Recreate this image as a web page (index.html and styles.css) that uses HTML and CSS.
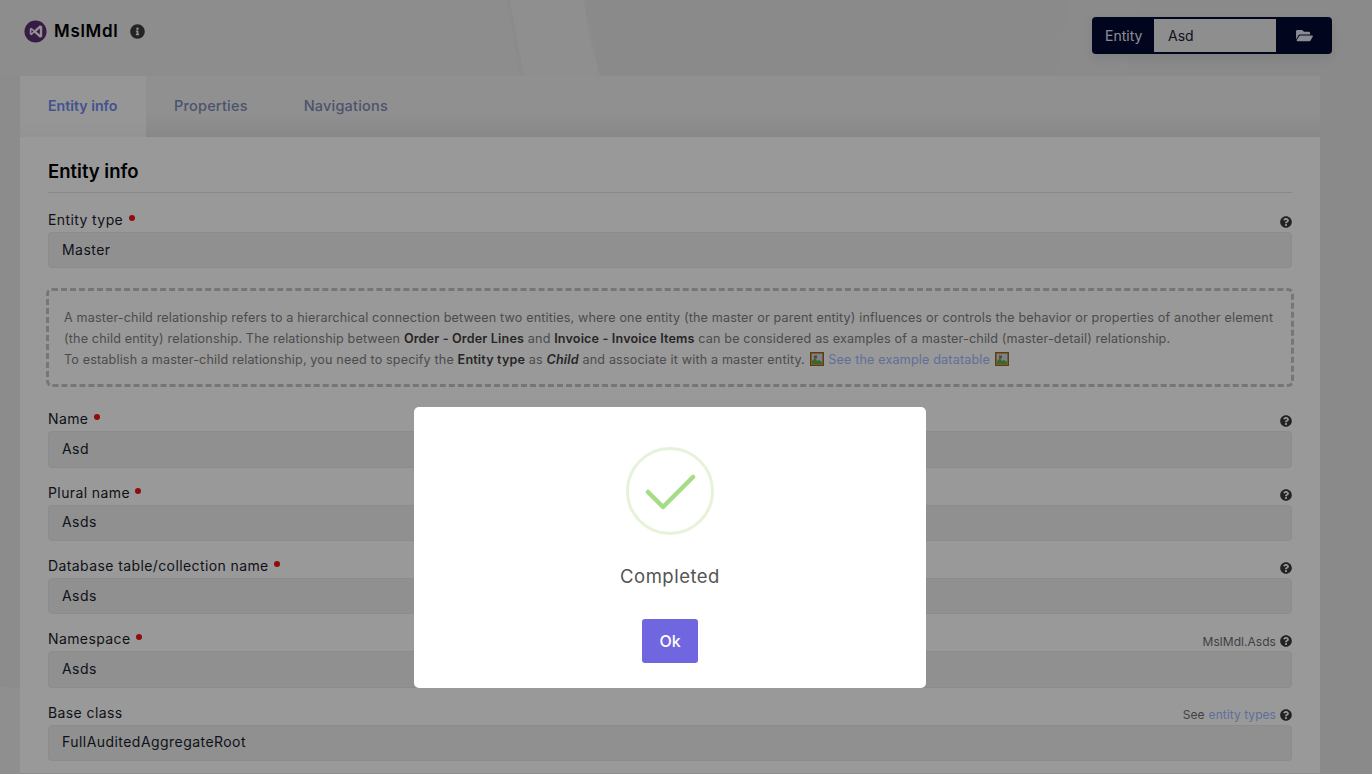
FILE: index.html
```html
<!DOCTYPE html>
<html lang="en">
<head>
<meta charset="utf-8">
<title>MslMdl</title>
<link rel="stylesheet" href="styles.css">
</head>
<body>
<svg class="bg-shapes" viewBox="0 0 1372 774" preserveAspectRatio="none" aria-hidden="true">
  <polygon points="0,0 506,0 522,76 0,76" fill="#ebebeb"/>
  <polygon points="506,0 510,0 524,76 520,76" fill="#e8e8e8"/>
  <polygon points="510,0 584,0 588,30 600,76 524,76" fill="#eeeeee"/>
  <polygon points="584,0 1070,0 1056,76 600,76" fill="#e6e6e6"/>
  <polygon points="1070,0 1140,0 1126,76 1056,76" fill="#e8e8e8"/>
  <polygon points="1140,0 1372,0 1372,76 1126,76" fill="#e6e6e6"/>
  <polygon points="1320,76 1372,76 1372,774 1320,774" fill="#e6e6e6"/>
  <polygon points="0,76 20,76 20,688 0,686" fill="#e9e9e9"/>
  <polygon points="0,686 20,688 20,774 0,774" fill="#eeeeee"/>
</svg>
<div class="page">
  <header class="topbar">
    <div class="brand">
      <svg class="logo" viewBox="0 0 24 24"><circle cx="12" cy="12" r="11.5" fill="#5c2d73"/><path d="M16.6 5.4 10.8 10.6 7.8 8.2 6 9.2v5.6l1.8 1 3-2.4 5.8 5.2 2.4-1.1V6.5zM7.8 13.9v-3.8l2 1.9zM16.5 15.2 12.9 12l3.6-3.2z" fill="#f4f0f7"/></svg>
      <span class="brand-name">MslMdl</span>
      <svg class="info-icon" viewBox="0 0 512 512"><path d="M256 8C119.043 8 8 119.083 8 256c0 136.997 111.043 248 248 248s248-111.003 248-248C504 119.083 392.957 8 256 8zm0 110c23.196 0 42 18.804 42 42s-18.804 42-42 42-42-18.804-42-42 18.804-42 42-42zm56 254c0 6.627-5.373 12-12 12h-88c-6.627 0-12-5.373-12-12v-24c0-6.627 5.373-12 12-12h12v-64h-12c-6.627 0-12-5.373-12-12v-24c0-6.627 5.373-12 12-12h64c6.627 0 12 5.373 12 12v100h12c6.627 0 12 5.373 12 12v24z"/></svg>
    </div>
    <div class="entity-picker">
      <span class="entity-label">Entity</span>
      <span class="entity-value">Asd</span>
      <span class="entity-open">
        <svg class="folder-icon" viewBox="0 0 576 512"><path d="M572.694 292.093L500.27 416.248A63.997 63.997 0 0 1 444.989 448H45.025c-18.523 0-30.064-20.093-20.731-36.093l72.424-124.155A64 64 0 0 1 152 256h399.964c18.523 0 30.064 20.093 20.73 36.093zM152 224h328v-48c0-26.51-21.49-48-48-48H272l-64-64H48C21.49 64 0 85.49 0 112v278.046l69.077-118.418C86.214 242.25 117.989 224 152 224z"/></svg>
      </span>
    </div>
  </header>

  <main class="card">
    <nav class="tabs">
      <span class="tab tab-active">Entity info</span>
      <span class="tab">Properties</span>
      <span class="tab">Navigations</span>
    </nav>
    <section class="card-body">
      <h2 class="section-title">Entity info</h2>

      <div class="field">
        <div class="field-head">
          <label class="field-label">Entity type <i class="req"></i></label>
          <span class="hint"><svg class="help-icon" viewBox="0 0 512 512"><use href="#q"/></svg></span>
        </div>
        <div class="input">Master</div>
      </div>

      <div class="note">
        A master-child relationship refers to a hierarchical connection between two entities, where one entity (the master or parent entity) influences or controls the behavior or properties of another element (the child entity) relationship. The relationship between <b>Order - Order Lines</b> and <b>Invoice - Invoice Items</b> can be considered as examples of a master-child (master-detail) relationship.<br>
        To establish a master-child relationship, you need to specify the <b>Entity type</b> as <b><em>Child</em></b> and associate it with a master entity.
        <svg class="pic" viewBox="0 0 14 14"><rect x=".5" y=".5" width="13" height="13" fill="#c89a45" stroke="#8d6a2a"/><rect x="2" y="2" width="10" height="10" fill="#c9dcec"/><path d="M2 12V9l3-3 2 3 2-1 3 2v2z" fill="#5fae4a"/><rect x="4" y="3.5" width="3" height="3" fill="#d6584f"/></svg>
        <a class="link">See the example datatable</a>
        <svg class="pic" viewBox="0 0 14 14"><rect x=".5" y=".5" width="13" height="13" fill="#c89a45" stroke="#8d6a2a"/><rect x="2" y="2" width="10" height="10" fill="#c9dcec"/><path d="M2 12V9l3-3 2 3 2-1 3 2v2z" fill="#5fae4a"/><rect x="4" y="3.5" width="3" height="3" fill="#d6584f"/></svg>
      </div>

      <div class="field">
        <div class="field-head">
          <label class="field-label">Name <i class="req"></i></label>
          <span class="hint"><svg class="help-icon" viewBox="0 0 512 512"><use href="#q"/></svg></span>
        </div>
        <div class="input">Asd</div>
      </div>

      <div class="field">
        <div class="field-head">
          <label class="field-label">Plural name <i class="req"></i></label>
          <span class="hint"><svg class="help-icon" viewBox="0 0 512 512"><use href="#q"/></svg></span>
        </div>
        <div class="input">Asds</div>
      </div>

      <div class="field">
        <div class="field-head">
          <label class="field-label">Database table/collection name <i class="req"></i></label>
          <span class="hint"><svg class="help-icon" viewBox="0 0 512 512"><use href="#q"/></svg></span>
        </div>
        <div class="input">Asds</div>
      </div>

      <div class="field">
        <div class="field-head">
          <label class="field-label">Namespace <i class="req"></i></label>
          <span class="hint">MslMdl.Asds <svg class="help-icon" viewBox="0 0 512 512"><use href="#q"/></svg></span>
        </div>
        <div class="input">Asds</div>
      </div>

      <div class="field">
        <div class="field-head">
          <label class="field-label">Base class</label>
          <span class="hint">See <a class="link">entity types</a> <svg class="help-icon" viewBox="0 0 512 512"><use href="#q"/></svg></span>
        </div>
        <div class="input">FullAuditedAggregateRoot</div>
      </div>
    </section>
  </main>
</div>

<svg class="defs" aria-hidden="true"><defs><path id="q" d="M504 256c0 136.997-111.043 248-248 248S8 392.997 8 256C8 119.083 119.043 8 256 8s248 111.083 248 248zM262.655 90c-54.497 0-89.255 22.957-116.549 63.758-3.536 5.286-2.353 12.415 2.715 16.258l34.699 26.31c5.205 3.947 12.621 3.008 16.665-2.122 17.864-22.658 30.113-35.797 57.303-35.797 20.429 0 45.698 13.148 45.698 32.958 0 14.976-12.363 22.667-32.534 33.976C247.128 238.528 216 254.941 216 296v4c0 6.627 5.373 12 12 12h56c6.627 0 12-5.373 12-12v-1.333c0-28.462 83.186-29.647 83.186-106.667 0-58.002-60.165-102-116.531-102zM256 338c-25.365 0-46 20.635-46 46 0 25.364 20.635 46 46 46s46-20.636 46-46c0-25.365-20.635-46-46-46z"/></defs></svg>

<div class="backdrop">
  <div class="modal" role="dialog">
    <svg class="success" viewBox="0 0 88 88">
      <circle cx="44" cy="44" r="42.5" fill="none" stroke="#e6f3d8" stroke-width="3"/>
      <path d="M22 45 37 60 67 30" fill="none" stroke="#a5dc86" stroke-width="4.5" stroke-linecap="round" stroke-linejoin="round"/>
    </svg>
    <p class="modal-text">Completed</p>
    <button class="ok">Ok</button>
  </div>
</div>
</body>
</html>
```
FILE: styles.css
```css
* { box-sizing: border-box; }
html, body { height: 100%; }
body {
  margin: 0;
  height: 774px;
  overflow: hidden;
  background: #e9e9e9;
  font-family: "Inter", "Liberation Sans", sans-serif;
  color: #181c32;
  position: relative;
}
.bg-shapes { position: absolute; inset: 0; width: 100%; height: 100%; }
.defs { position: absolute; width: 0; height: 0; }
.page { position: relative; padding: 17px 40px 0 20px; }

.topbar { display: flex; justify-content: space-between; align-items: flex-start; height: 59px; }
.brand { display: flex; align-items: center; height: 28px; padding-left: 4px; }
.logo { width: 23px; height: 23px; margin-right: 7px; }
.brand-name { font-size: 17px; font-weight: 600; color: #000; letter-spacing: .7px; }
.info-icon { width: 15px; height: 15px; margin-left: 12px; fill: #3c3c3c; }

.entity-picker {
  display: flex; align-items: stretch; width: 240px; height: 37px; padding: 2px 0;
  background: #020a32; border-radius: 4px;
  box-shadow: 0 4px 12px rgba(0,0,0,.08);
}
.entity-label { width: 62px; display: flex; align-items: center; padding-left: 13px; color: #e6e9f5; font-size: 14px; }
.entity-value { width: 122px; display: flex; align-items: center; padding-left: 14px; background: #ededed; color: #181c32; font-size: 14px; }
.entity-open { flex: 1; display: flex; align-items: center; justify-content: center; }
.folder-icon { width: 17px; height: 15px; fill: #e6e9f5; }

.card { width: 1300px; background: #fff; }
.tabs { display: flex; height: 61px; background: linear-gradient(#f1f1f1 60%, #e2e2e2); }
.tab { display: flex; align-items: center; padding: 0 28px 2px; font-size: 14.5px; font-weight: 500; color: #7f8ab8; letter-spacing: .2px; white-space: nowrap; }
.tab-active { background: linear-gradient(#fafafa 75%, #f5f5f5); color: #6f8aef; font-weight: 600; font-size: 14.2px; letter-spacing: 0; width: 126px; padding-right: 0; }
.card-body { padding: 20px 28px 0; }
.section-title { margin: 0 0 14px; padding-bottom: 7px; height: 36px; font-size: 18.5px; line-height: 28px; font-weight: 600; color: #000; border-bottom: 1px solid #e4e4e4; }

.field { height: 73.33px; }
.field-head { display: flex; justify-content: space-between; align-items: center; height: 25px; }
.field-label { font-size: 14px; color: #1a1d2d; letter-spacing: .4px; }
.req { display: inline-block; width: 6px; height: 6px; margin: 0 0 4px 1px; border-radius: 50%; background: #f01414; }
.hint { display: flex; align-items: center; gap: 4px; font-size: 12px; color: #6d6d6d; padding-top: 5px; letter-spacing: .05px; }
.help-icon { width: 12px; height: 12px; fill: #3a3a3a; }
.input { height: 36.4px; padding: 0 13px 2px; display: flex; align-items: center; background: #f0f0f0; border: 1px solid #e9e9e9; border-radius: 4px; font-size: 14px; color: #1a1d2d; letter-spacing: .45px; }

.note {
  margin: 8px -2px 19px; height: 99px; padding: 16px 15px 0; border: 3px dashed #c5c5c5; border-radius: 6px;
  font-size: 12.6px; line-height: 21px; color: #7e7e7e; letter-spacing: .155px;
}
.note b { font-weight: 600; color: #3f3f3f; }
.link { color: #a0baff; }
.pic { display: inline-block; width: 14px; height: 14px; vertical-align: -2px; margin: 0 1px; }

.backdrop {
  position: fixed; inset: 0; background: rgba(0,0,0,.4);
  display: flex; justify-content: center; align-items: flex-start; padding: 407px 32px 0 0;
}
.modal {
  width: 512px; height: 281px; background: #fff; border-radius: 5px;
  display: flex; flex-direction: column; align-items: center; padding-top: 40px;
}
.success { width: 88px; height: 88px; }
.modal-text { margin: 28px 0 0; font-size: 18.5px; line-height: 26px; color: #545454; letter-spacing: .5px; }
.ok {
  margin-top: 30px; width: 56px; height: 44px; border: 0; border-radius: 3px; background: #7066e0; color: #fff;
  font: 500 16px "Inter", "Liberation Sans", sans-serif;
}
```
